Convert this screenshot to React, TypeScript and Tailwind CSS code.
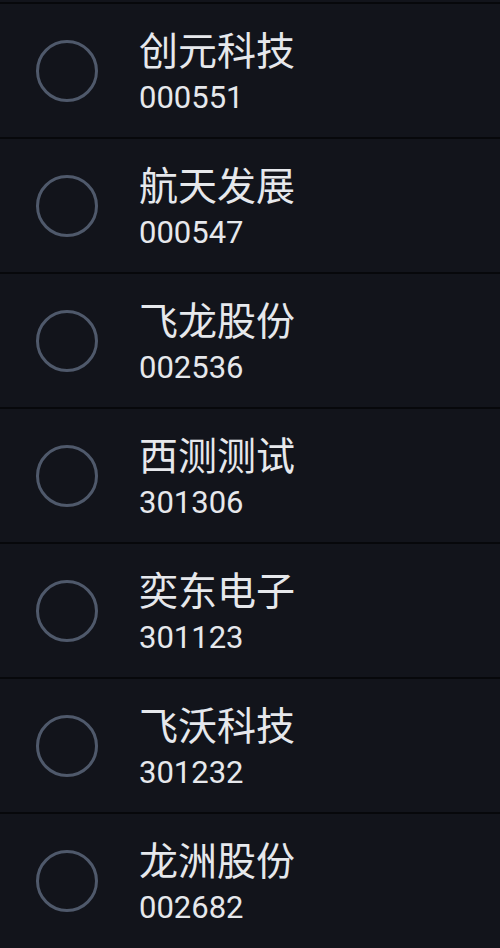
import React from "react";

interface Stock {
    name: string;
    code: string;
}

const stocks: Stock[] = [
    { name: "创元科技", code: "000551" },
    { name: "航天发展", code: "000547" },
    { name: "飞龙股份", code: "002536" },
    { name: "西测测试", code: "301306" },
    { name: "奕东电子", code: "301123" },
    { name: "飞沃科技", code: "301232" },
    { name: "龙洲股份", code: "002682" },
];

// 종목 한 줄
const StockRow = ({ stock }: { stock: Stock }) => (
    <div className="flex items-center h-[135px] border-t-2 border-[#07080b] pl-[36px]">
        <div className="w-[62px] h-[62px] rounded-full border-[3px] border-[#4f596b] shrink-0" />
        <div className="ml-[41px] flex flex-col text-[#e6e8ec]">
            <span className="text-[39px] leading-[46px]">{stock.name}</span>
            <span
                className="text-[31px] leading-[36px] mt-[9px]"
                style={{ fontFamily: 'Roboto, "Noto Sans", sans-serif' }}
            >
                {stock.code}
            </span>
        </div>
    </div>
);

export default function App() {
    return (
        <div
            className="w-[500px] h-[948px] overflow-hidden bg-[#12141b] pt-[2px]"
            style={{ fontFamily: '"Noto Sans CJK SC", "Noto Sans", sans-serif' }}
        >
            {stocks.map((s) => (
                <StockRow key={s.code} stock={s} />
            ))}
        </div>
    );
}
